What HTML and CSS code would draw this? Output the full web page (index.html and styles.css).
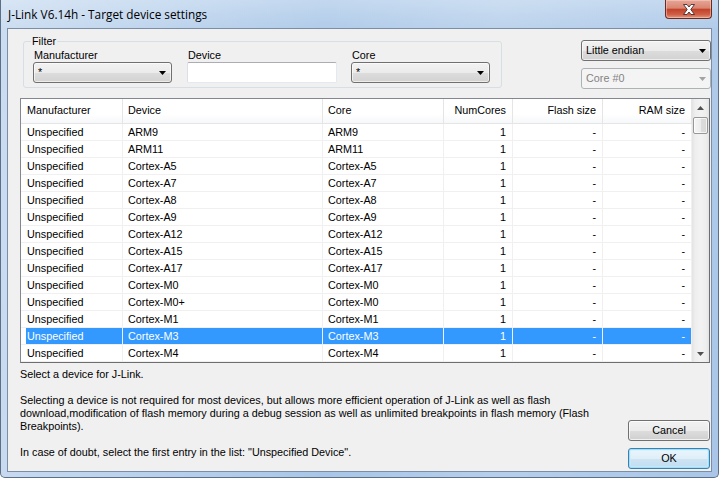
FILE: index.html
```html
<!DOCTYPE html>
<html>
<head>
<meta charset="utf-8">
<title>J-Link V6.14h - Target device settings</title>
<link rel="stylesheet" href="styles.css">
</head>
<body>
<div class="window">
  <div class="titlebar">
    <span class="title">J-Link V6.14h - Target device settings</span>
    <div class="close">
      <svg width="14" height="11" viewBox="0 0 14 11"><path d="M1.5 0.5 L5 0.5 L7 3 L9 0.5 L12.5 0.5 L8.8 5.5 L12.5 10.5 L9 10.5 L7 8 L5 10.5 L1.5 10.5 L5.2 5.5 Z" fill="#ffffff" stroke="#4a2a28" stroke-width="0.9" stroke-linejoin="round"/></svg>
    </div>
  </div>
  <div class="client">
    <div class="top">
      <fieldset class="filter">
        <legend>Filter</legend>
        <div class="field">
          <label class="lbl">Manufacturer</label>
          <div class="combo w139"><span class="ctext">*</span><svg class="arrow" width="7" height="4" viewBox="0 0 7 4"><path d="M0 0 H7 L3.5 4 Z" fill="#000"/></svg></div>
        </div>
        <div class="field">
          <label class="lbl">Device</label>
          <div class="textbox"></div>
        </div>
        <div class="field">
          <label class="lbl">Core</label>
          <div class="combo w139"><span class="ctext">*</span><svg class="arrow" width="7" height="4" viewBox="0 0 7 4"><path d="M0 0 H7 L3.5 4 Z" fill="#000"/></svg></div>
        </div>
      </fieldset>
      <div class="side">
        <div class="combo side-combo"><span class="ctext">Little endian</span><svg class="arrow" width="7" height="4" viewBox="0 0 7 4"><path d="M0 0 H7 L3.5 4 Z" fill="#000"/></svg></div>
        <div class="combo side-combo disabled"><span class="ctext">Core #0</span><svg class="arrow" width="7" height="4" viewBox="0 0 7 4"><path d="M0 0 H7 L3.5 4 Z" fill="#a3a3a3"/></svg></div>
      </div>
    </div>

    <div class="list">
      <div class="listbody">
        <div class="row head">
          <div class="c c1">Manufacturer</div><div class="c c2">Device</div><div class="c c3">Core</div><div class="c c4 r">NumCores</div><div class="c c5 r">Flash size</div><div class="c c6 r">RAM size</div>
        </div>
        <div class="row"><div class="c c1">Unspecified</div><div class="c c2">ARM9</div><div class="c c3">ARM9</div><div class="c c4 r">1</div><div class="c c5 r">-</div><div class="c c6 r">-</div></div>
        <div class="row"><div class="c c1">Unspecified</div><div class="c c2">ARM11</div><div class="c c3">ARM11</div><div class="c c4 r">1</div><div class="c c5 r">-</div><div class="c c6 r">-</div></div>
        <div class="row"><div class="c c1">Unspecified</div><div class="c c2">Cortex-A5</div><div class="c c3">Cortex-A5</div><div class="c c4 r">1</div><div class="c c5 r">-</div><div class="c c6 r">-</div></div>
        <div class="row"><div class="c c1">Unspecified</div><div class="c c2">Cortex-A7</div><div class="c c3">Cortex-A7</div><div class="c c4 r">1</div><div class="c c5 r">-</div><div class="c c6 r">-</div></div>
        <div class="row"><div class="c c1">Unspecified</div><div class="c c2">Cortex-A8</div><div class="c c3">Cortex-A8</div><div class="c c4 r">1</div><div class="c c5 r">-</div><div class="c c6 r">-</div></div>
        <div class="row"><div class="c c1">Unspecified</div><div class="c c2">Cortex-A9</div><div class="c c3">Cortex-A9</div><div class="c c4 r">1</div><div class="c c5 r">-</div><div class="c c6 r">-</div></div>
        <div class="row"><div class="c c1">Unspecified</div><div class="c c2">Cortex-A12</div><div class="c c3">Cortex-A12</div><div class="c c4 r">1</div><div class="c c5 r">-</div><div class="c c6 r">-</div></div>
        <div class="row"><div class="c c1">Unspecified</div><div class="c c2">Cortex-A15</div><div class="c c3">Cortex-A15</div><div class="c c4 r">1</div><div class="c c5 r">-</div><div class="c c6 r">-</div></div>
        <div class="row"><div class="c c1">Unspecified</div><div class="c c2">Cortex-A17</div><div class="c c3">Cortex-A17</div><div class="c c4 r">1</div><div class="c c5 r">-</div><div class="c c6 r">-</div></div>
        <div class="row"><div class="c c1">Unspecified</div><div class="c c2">Cortex-M0</div><div class="c c3">Cortex-M0</div><div class="c c4 r">1</div><div class="c c5 r">-</div><div class="c c6 r">-</div></div>
        <div class="row"><div class="c c1">Unspecified</div><div class="c c2">Cortex-M0+</div><div class="c c3">Cortex-M0</div><div class="c c4 r">1</div><div class="c c5 r">-</div><div class="c c6 r">-</div></div>
        <div class="row"><div class="c c1">Unspecified</div><div class="c c2">Cortex-M1</div><div class="c c3">Cortex-M1</div><div class="c c4 r">1</div><div class="c c5 r">-</div><div class="c c6 r">-</div></div>
        <div class="row sel"><div class="c c1">Unspecified</div><div class="c c2">Cortex-M3</div><div class="c c3">Cortex-M3</div><div class="c c4 r">1</div><div class="c c5 r">-</div><div class="c c6 r">-</div></div>
        <div class="row"><div class="c c1">Unspecified</div><div class="c c2">Cortex-M4</div><div class="c c3">Cortex-M4</div><div class="c c4 r">1</div><div class="c c5 r">-</div><div class="c c6 r">-</div></div>
      </div>
      <div class="scrollbar">
        <div class="sbtn"><svg width="7" height="4" viewBox="0 0 7 4"><path d="M3.5 0 L7 4 H0 Z" fill="#505050"/></svg></div>
        <div class="track">
          <div class="thumb"></div>
        </div>
        <div class="sbtn"><svg width="7" height="4" viewBox="0 0 7 4"><path d="M0 0 H7 L3.5 4 Z" fill="#505050"/></svg></div>
      </div>
    </div>

    <div class="bottom">
      <div class="info">Select a device for J-Link.<br><br>Selecting a device is not required for most devices, but allows more efficient operation of J-Link as well as flash<br>download,modification of flash memory during a debug session as well as unlimited breakpoints in flash memory (Flash<br>Breakpoints).<br><br>In case of doubt, select the first entry in the list: "Unspecified Device".</div>
      <div class="buttons">
        <div class="btn">Cancel</div>
        <div class="btn default">OK</div>
      </div>
    </div>
  </div>
</div>
</body>
</html>
```

FILE: styles.css
```css
html, body {
  margin: 0;
  padding: 0;
}
body {
  width: 719px;
  height: 478px;
  overflow: hidden;
  font-family: "Liberation Sans", Arial, sans-serif;
  font-size: 10.8px;
  color: #000;
  background: #fff;
}
.window {
  box-sizing: border-box;
  width: 719px;
  height: 478px;
  display: flex;
  flex-direction: column;
  padding: 0 6px 5px 6px;
  border: 1px solid #5d6f86;
  border-top: none;
  border-radius: 0 0 5px 5px;
  background:
    linear-gradient(to right, rgba(255,255,255,0.35), rgba(255,255,255,0) 45%, rgba(255,255,255,0.15) 70%, rgba(255,255,255,0) 100%),
    linear-gradient(to bottom, #c3d8ef 0px, #b0cbe9 30px, #a9c6e8 100%);
}
.titlebar {
  height: 28px;
  flex: none;
  display: flex;
  align-items: flex-start;
}
.title {
  font-family: "Open Sans", "Noto Sans", sans-serif;
  font-size: 11.8px;
  line-height: 16px;
  padding: 6px 0 0 1px;
  color: #000;
}
.close {
  margin-left: auto;
  box-sizing: border-box;
  width: 47px;
  height: 19px;
  border: 1px solid #6b2a20;
  border-top: none;
  border-radius: 0 0 4px 4px;
  background: linear-gradient(to bottom, #e7a697 0%, #d98570 45%, #c2432b 52%, #cf5e45 80%, #e29a7c 100%);
  box-shadow: inset 0 0 0 1px rgba(255,220,210,0.45);
  display: flex;
  align-items: center;
  justify-content: center;
}
.client {
  flex: 1;
  box-sizing: border-box;
  border: 1px solid #7c8ea6;
  background: #f0f0f0;
  display: flex;
  flex-direction: column;
  padding: 6px 0 0 12px;
  min-height: 0;
}
.top {
  display: flex;
  align-items: flex-start;
  flex: none;
}
.filter {
  box-sizing: border-box;
  width: 479px;
  margin: 0 0 0 3px;
  padding: 1px 9px 4px 9px;
  border: 1px solid #d5dfe5;
  border-radius: 3px;
  display: flex;
  gap: 15px;
  min-width: 0;
}
.filter legend {
  padding: 0 1px;
  margin-left: -2px;
  line-height: 13px;
}
.field {
  display: flex;
  flex-direction: column;
}
.field:last-child {
  margin-left: -1px;
}
.lbl {
  line-height: 13px;
  padding-left: 1px;
}
.combo {
  box-sizing: border-box;
  height: 21px;
  border: 1px solid #707070;
  border-radius: 3px;
  background: linear-gradient(to bottom, #f2f2f2 0%, #ebebeb 50%, #dddddd 51%, #d2d2d2 100%);
  box-shadow: inset 0 0 0 1px rgba(255,255,255,0.6);
  display: flex;
  align-items: center;
  padding: 0 5px 0 4px;
}
.w139 {
  width: 139px;
}
.ctext {
  flex: 1;
  line-height: 13px;
  white-space: nowrap;
}
.arrow {
  flex: none;
  display: block;
}
.textbox {
  box-sizing: border-box;
  width: 150px;
  height: 21px;
  background: #fff;
  border: 1px solid #abadb3;
  border-left-color: #dbdfe6;
  border-right-color: #e3e9ef;
  border-bottom-color: #e3e9ef;
  border-radius: 2px;
}
.side {
  margin-left: auto;
  margin-top: 5px;
  width: 130px;
  display: flex;
  flex-direction: column;
  gap: 7px;
}
.side-combo {
  width: 130px;
  padding: 0 4px 0 4px;
}
.combo.disabled {
  border-color: #adb2b5;
  background: #f4f4f4;
  box-shadow: none;
  color: #838383;
}
.list {
  flex: none;
  box-sizing: border-box;
  width: 690px;
  height: 265px;
  margin: 9px 0 0 0;
  border: 1px solid #828790;
  border-right-color: #6e6e6e;
  border-bottom-color: #6e6e6e;
  background: #fff;
  display: flex;
}
.listbody {
  width: 671px;
  flex: none;
  overflow: hidden;
}
.row {
  display: flex;
  height: 17px;
  box-sizing: border-box;
  border-bottom: 1px solid #f0f0f0;
}
.row.head {
  height: 25px;
  border-bottom: 1px solid #e5e5e5;
  background: linear-gradient(to bottom, #ffffff 0%, #ffffff 60%, #f7f8fa 100%);
}
.c {
  box-sizing: border-box;
  height: 100%;
  border-right: 1px solid #f0f0f0;
  padding: 0 6px 0 5px;
  display: flex;
  align-items: center;
  white-space: nowrap;
  overflow: hidden;
  line-height: 13px;
}
.head .c {
  border-right-color: #e5e5e5;
  padding-bottom: 2px;
}
.c.r {
  justify-content: flex-end;
}
.c1 { width: 102px; padding-left: 6px; }
.c2 { width: 200px; }
.c3 { width: 121px; }
.c4 { width: 69px; }
.c5 { width: 90px; }
.c6 { width: 89px; }
.row.sel {
  color: #fff;
}
.row.sel .c {
  background: #3399ff;
}
.row.sel .c1 {
  background: linear-gradient(to right, transparent 5px, #3399ff 5px);
}
.scrollbar {
  width: 17px;
  flex: none;
  display: flex;
  flex-direction: column;
  background: linear-gradient(to right, #e3e3e3 0px, #eeeeee 3px, #f2f2f2 50%, #eeeeee 14px, #e3e3e3 17px);
}
.sbtn {
  height: 17px;
  flex: none;
  display: flex;
  align-items: center;
  justify-content: center;
}
.track {
  flex: 1;
  padding-top: 1px;
}
.thumb {
  box-sizing: border-box;
  width: 15px;
  height: 17px;
  margin-left: 1px;
  border: 1px solid #979797;
  border-radius: 2px;
  background: linear-gradient(to right, #f5f5f5 0%, #ececec 50%, #dcdcdc 51%, #d8d8d8 100%);
  box-shadow: inset 0 0 0 1px rgba(255,255,255,0.7);
}
.bottom {
  flex: 1;
  display: flex;
  min-height: 0;
}
.info {
  margin-top: 5px;
  line-height: 13px;
  white-space: nowrap;
}
.buttons {
  margin-left: auto;
  display: flex;
  flex-direction: column;
  justify-content: flex-end;
  gap: 7px;
  padding: 0 1px 2px 0;
}
.btn {
  box-sizing: border-box;
  width: 82px;
  height: 21px;
  border: 1px solid #707070;
  border-radius: 3px;
  background: linear-gradient(to bottom, #f2f2f2 0%, #ebebeb 50%, #dddddd 51%, #cfcfcf 100%);
  box-shadow: inset 0 0 0 1px rgba(255,255,255,0.7);
  display: flex;
  align-items: center;
  justify-content: center;
  line-height: 13px;
}
.btn.default {
  border-color: #3c7fb1;
  box-shadow: inset 0 0 0 1px #9fe0f8, inset 0 0 0 2px rgba(200,240,255,0.5);
  background: linear-gradient(to bottom, #eaf6fd 0%, #e0eef8 50%, #cde4f3 51%, #c2dcef 100%);
}
```
